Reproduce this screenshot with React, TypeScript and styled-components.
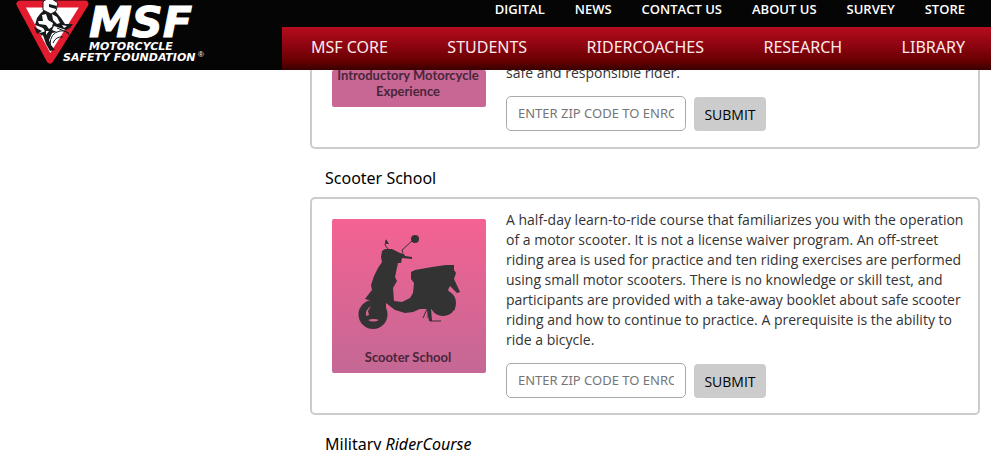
import React from "react";
import styled, { createGlobalStyle } from "styled-components";

const GlobalStyle = createGlobalStyle`
  * { box-sizing: border-box; }
  body {
    margin: 0;
    background: #fff;
    color: #333;
    font-family: "Open Sans", "Noto Sans", sans-serif;
    font-size: 14px;
    line-height: 20px;
  }
`;

const Page = styled.div`
  height: 100vh;
  overflow: hidden;
`;

const Header = styled.header`
  display: flex;
  background: #050505;
`;

const Brand = styled.a`
  flex: 0 0 282px;
  height: 70px;
  padding-left: 12px;
`;

const Navs = styled.div`
  flex: 1;
  display: flex;
  flex-direction: column;
`;

const TopNav = styled.nav`
  display: flex;
  justify-content: flex-end;
  gap: 30px;
  height: 27px;
  padding-right: 26px;
  line-height: 18px;
`;

const TopLink = styled.a`
  color: #fff;
  font-size: 13px;
  font-weight: 600;
  text-decoration: none;
  white-space: nowrap;
`;

const MainNav = styled.nav`
  display: flex;
  align-items: center;
  justify-content: space-between;
  height: 43px;
  padding: 0 26px 4px 29px;
  background: linear-gradient(#b50d1c 0%, #8c0410 45%, #650000 80%, #380000 100%);
`;

const MainLink = styled.a`
  color: #fbeaea;
  font-family: "Noto Sans", sans-serif;
  font-size: 16px;
  text-decoration: none;
  white-space: nowrap;
`;

const Courses = styled.main`
  margin: 0 11px 0 310px;
`;

const CourseTitle = styled.h2`
  margin: 0;
  padding: 19px 15px 9px;
  color: #000;
  font-family: "Noto Sans", sans-serif;
  font-size: 16px;
  font-weight: 400;
  line-height: 20px;
`;

const Card = styled.section<{ $scrolled?: boolean }>`
  display: flex;
  align-items: ${(p) => (p.$scrolled ? "flex-end" : "flex-start")};
  gap: 20px;
  height: ${(p) => (p.$scrolled ? "79px" : "auto")};
  overflow: hidden;
  padding: ${(p) => (p.$scrolled ? "0 8px 16px 20px" : "11px 8px 15px 20px")};
  border: 2px solid #ccc;
  border-top-width: ${(p) => (p.$scrolled ? "0" : "2px")};
  border-radius: ${(p) => (p.$scrolled ? "0 0 5px 5px" : "5px")};
`;

const Tile = styled.figure<{ $scrolled?: boolean }>`
  display: flex;
  flex: 0 0 154px;
  flex-direction: column;
  align-items: center;
  justify-content: flex-end;
  height: ${(p) => (p.$scrolled ? "37px" : "154px")};
  margin: ${(p) => (p.$scrolled ? "0 0 24px" : "9px 0 0")};
  padding-bottom: 8px;
  border-radius: 2px;
  background: ${(p) =>
    p.$scrolled ? "#c86793" : "linear-gradient(#f46292, #c46895)"};
`;

const TileCaption = styled.figcaption`
  padding-right: 2px;
  color: #49263a;
  font-family: Lato, sans-serif;
  font-size: 13px;
  font-weight: 700;
  line-height: 16px;
  text-align: center;
  white-space: nowrap;
`;

const Details = styled.div`
  flex: 1;
  min-width: 0;
`;

const Description = styled.p`
  margin: 0 0 13px;
`;

const EnrollForm = styled.form`
  display: flex;
  align-items: flex-end;
  gap: 8px;
`;

const ZipInput = styled.input`
  width: 180px;
  height: 35px;
  padding: 0 11px 2px;
  border: 1px solid #aaa;
  border-radius: 5px;
  background: #fff;
  color: #333;
  font: 13px "Noto Sans", sans-serif;
  &::placeholder { color: #757575; opacity: 1; }
`;

const SubmitButton = styled.button`
  width: 72px;
  height: 34px;
  padding: 0;
  border: 0;
  border-radius: 4px;
  background: #ccc;
  color: #000;
  font: 14px "Open Sans", "Noto Sans", sans-serif;
`;

const topLinks = ["DIGITAL", "NEWS", "CONTACT US", "ABOUT US", "SURVEY", "STORE"];
const mainLinks = ["MSF CORE", "STUDENTS", "RIDERCOACHES", "RESEARCH", "LIBRARY"];

function Logo() {
  return (
    <svg width="200" height="70" viewBox="12 0 200 70" role="img" aria-label="Motorcycle Safety Foundation">
      <path d="M20 4H85L50 60Z" fill="#fff" stroke="#e31b2e" strokeWidth="7" strokeLinejoin="round" />
      <path d="M44 10L40 14L37 18L35 25L38 26L43 28L45 31L42 33L44 38L46 44L50 51L55 50L51 45L49 40L52 33L57 32L52 30L54 26L60 28L66 30L70 28L73 24L65 24L61 18L56 12L48 11Z" fill="#17191b" />
      <path d="M42 15L46 14L48 20L53 23L52 27L49 29L46 25L39 24L38 21L43 21ZM52 14L57 17L60 23L57 24L53 20ZM46 31L49 31L46 35ZM62 25L67 26L64 28Z" fill="#fff" />
      <path d="M43 2Q46-2 52-1L58 3L56 11L51 14L43 10Z" fill="#fff" stroke="#17191b" strokeWidth="1" />
      <path d="M49 4L57 6L56 9L49 7ZM34 27L42 31L37 34ZM39 33L44 32L42 36Z" fill="#17191b" />
      <path d="M50 45Q50 33 60 31Q67 30 69 35M53 43Q56 36 63 37M57 28L69 33" fill="none" stroke="#17191b" strokeWidth="1" />
      <g fill="#fff" stroke="#fff" fontFamily="DejaVu Sans, sans-serif" fontWeight="700" fontStyle="italic">
        <text x="89" y="37" fontSize="43" strokeWidth="1">MSF</text>
        <text x="89" y="50" fontSize="11" strokeWidth="0">MOTORCYCLE</text>
        <text x="63" y="61" fontSize="11" strokeWidth="0">SAFETY FOUNDATION</text>
      </g>
      <text x="198" y="57" fontSize="8" fill="#fff" fontFamily="Liberation Sans, sans-serif">®</text>
    </svg>
  );
}

function Scooter() {
  return (
    <svg width="154" height="130" viewBox="0 0 154 130" aria-hidden="true">
      <g fill="#333">
        <path d="M50 32L53 30L60 30L64 32L68 34L72 35L73 37L80 38V40L70 39L69 44L66 44L63 58L65 62L61 69L62 82L70 83L78 79L81 74L82 64L79 60V53L83 51L100 48L114 46L122 46V51L124 54L122 60L128 73L125 74L118 67L116 71L123 81V91L97 90L88 90L81 93L73 94L63 91L54 84L54 90L47 84L33 80L36 76L40 71L39 66L42 57L46 49L50 43L49 38Z" />
        <ellipse cx="83" cy="20" rx="4" ry="4" />
        <circle cx="111" cy="84" r="13" />
        <path fillRule="evenodd" d="M41 81A14 14 0 1 0 41 110A14 14 0 1 0 41 81ZM39 87L36 92L37 96L34 97Q33 91 39 87ZM36 101Q42 99 47 101Q41 104 36 101Z" />
        <path d="M54 20L57 25L54 25Z" />
      </g>
      <path d="M56 30L53 26L54 21M71 34L70 31L81 21M95 90L91 99M97 89L98 102H109M96 90V99" fill="none" stroke="#333" strokeWidth="1" />
      <path d="M95 89H99L100 102H97Z" fill="#333" />
    </svg>
  );
}

function ZipForm({ course }: { course: string }) {
  return (
    <EnrollForm onSubmit={(event) => event.preventDefault()}>
      <ZipInput aria-label={`Zip code for ${course}`} placeholder="ENTER ZIP CODE TO ENROLL" />
      <SubmitButton type="submit">SUBMIT</SubmitButton>
    </EnrollForm>
  );
}

export default function App() {
  return (
    <Page>
      <GlobalStyle />
      <Header>
        <Brand href="#"><Logo /></Brand>
        <Navs>
          <TopNav aria-label="Site">
            {topLinks.map((label) => <TopLink href="#" key={label}>{label}</TopLink>)}
          </TopNav>
          <MainNav aria-label="Main">
            {mainLinks.map((label) => <MainLink href="#" key={label}>{label}</MainLink>)}
          </MainNav>
        </Navs>
      </Header>
      <Courses>
        <Card $scrolled>
          <Tile $scrolled>
            <TileCaption>Introductory Motorcycle<br />Experience</TileCaption>
          </Tile>
          <Details>
            <Description>safe and responsible rider.</Description>
            <ZipForm course="Introductory Motorcycle Experience" />
          </Details>
        </Card>
        <CourseTitle>Scooter School</CourseTitle>
        <Card>
          <Tile>
            <Scooter />
            <TileCaption>Scooter School</TileCaption>
          </Tile>
          <Details>
            <Description>
              A half-day learn-to-ride course that familiarizes you with the operation<br />
              of a motor scooter. It is not a license waiver program. An off-street<br />
              riding area is used for practice and ten riding exercises are performed<br />
              using small motor scooters. There is no knowledge or skill test, and<br />
              participants are provided with a take-away booklet about safe scooter<br />
              riding and how to continue to practice. A prerequisite is the ability to<br />
              ride a bicycle.
            </Description>
            <ZipForm course="Scooter School" />
          </Details>
        </Card>
        <CourseTitle>Military <em>RiderCourse</em></CourseTitle>
      </Courses>
    </Page>
  );
}
